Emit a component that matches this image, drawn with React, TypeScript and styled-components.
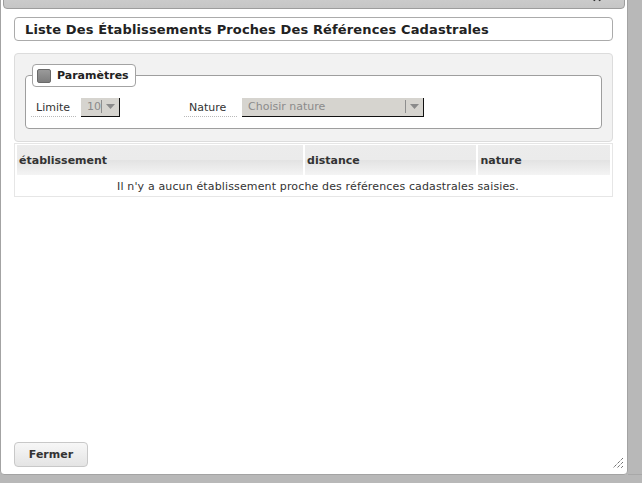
import React from "react";
import styled, { createGlobalStyle } from "styled-components";

const GlobalStyle = createGlobalStyle`
  html, body { margin: 0; padding: 0; }
  body {
    font-family: "DejaVu Sans", Verdana, sans-serif;
    font-size: 11px;
    color: #333;
    background: #b8b8b8;
  }
  * { box-sizing: border-box; }
`;

const Page = styled.div`
  position: relative;
  width: 642px;
  height: 483px;
  overflow: hidden;
  background: #b8b8b8;
`;

/* ---------- background application (under the modal) ---------- */
const Backdrop = styled.div`
  display: grid;
  grid-template-columns: 1fr 14px;
  grid-template-rows: 1fr 9px;
  width: 100%;
  height: 100%;
`;

const BackSpacer = styled.div``;

const RightStrip = styled.div`
  grid-row: 1 / span 2;
  display: flex;
  flex-direction: column;
  color: #8a8a8a;
  font-size: 12px;
`;

const StripCell = styled.div<{ $h: number; $line?: string }>`
  height: ${(p) => p.$h}px;
  border-bottom: ${(p) => (p.$line ? `1px solid ${p.$line}` : "none")};
  padding-left: 1px;
  line-height: ${(p) => p.$h}px;
  overflow: hidden;
  white-space: nowrap;
`;

const StripIcons = styled.div`
  height: 44px;
  display: flex;
  gap: 3px;
  padding-top: 6px;
  align-items: flex-start;
`;

const BracketBox = styled.div`
  width: 4px;
  height: 16px;
  border: 1px solid #a2a2a2;
  border-left: none;
`;

const MiniIcon = styled.div`
  width: 6px;
  height: 16px;
  border: 1px solid #8c8c8c;
  background: repeating-linear-gradient(#a8a8a8 0 2px, #c4c4c4 2px 4px);
`;

const RoundTab = styled.div`
  width: 6px;
  height: 20px;
  margin-top: 130px;
  border: 1px solid #ababab;
  border-left: none;
  border-radius: 0 4px 4px 0;
`;

const BottomRow = styled.div`
  display: flex;
  color: #858585;
  font-size: 12px;
  line-height: 11px;
  overflow: hidden;
  border-top: 1px solid #a8a8a8;
`;

const BottomCell = styled.div<{ $w?: number; $pad?: number; $light?: boolean }>`
  flex: ${(p) => (p.$w ? `0 0 ${p.$w}px` : "1")};
  padding-left: ${(p) => p.$pad ?? 0}px;
  padding-top: 1px;
  border-right: 1px solid #a9a9a9;
  background: ${(p) => (p.$light ? "#bdbdbd" : "transparent")};
  white-space: nowrap;
  overflow: hidden;
`;

/* ---------- dialog ---------- */
const Dialog = styled.div`
  position: absolute;
  left: 0;
  top: -18px;
  width: 628px;
  height: 493px;
  display: flex;
  flex-direction: column;
  padding: 2px;
  background: #fff;
  border: 1px solid #a3a3a3;
  border-radius: 4px;
`;

const TitleBar = styled.div`
  flex: 0 0 24px;
  display: flex;
  align-items: center;
  justify-content: flex-end;
  padding-right: 22px;
  background: linear-gradient(#d2d2d2, #c6c6c6);
  border: 1px solid #9d9d9d;
  border-radius: 4px;
`;

const Content = styled.div`
  flex: 1;
  display: flex;
  flex-direction: column;
  padding: 8px 12px 0 11px;
`;

const TitleBox = styled.div`
  height: 24px;
  display: flex;
  align-items: center;
  padding-left: 10px;
  border: 1px solid #ababab;
  border-radius: 4px;
  font-size: 13px;
  font-weight: bold;
  letter-spacing: 0.13px;
  color: #222;
`;

const Panel = styled.div`
  margin-top: 12px;
  padding: 10px 10px 12px 10px;
  background: #f2f2f2;
  border: 1px solid #dcdcdc;
  border-radius: 4px;
`;

const FieldSet = styled.fieldset`
  margin: 0;
  padding: 10px 5px 11px 5px;
  border: 1px solid #9e9e9e;
  border-radius: 4px;
  background: #fff;
`;

const Legend = styled.legend`
  display: flex;
  align-items: center;
  gap: 6px;
  height: 23px;
  padding: 0 6px 0 4px;
  margin-left: 1px;
  background: #fff;
  border: 1px solid #a3a3a3;
  border-radius: 4px;
  font-weight: bold;
  color: #222;
`;

const ToggleBox = styled.span`
  width: 14px;
  height: 14px;
  border: 1px solid #6a6a6a;
  border-radius: 2px;
  background: linear-gradient(#9a9a9a, #7e7e7e);
`;

const FieldRow = styled.div`
  display: flex;
  align-items: center;
  height: 20px;
`;

const FieldGroup = styled.div<{ $w?: number }>`
  display: flex;
  align-items: center;
  gap: 5px;
  flex: ${(p) => (p.$w ? `0 0 ${p.$w}px` : "0 0 auto")};
`;

const FieldLabel = styled.span<{ $w: number }>`
  width: ${(p) => p.$w}px;
  height: 20px;
  line-height: 21px;
  padding-left: 5px;
  border-bottom: 1px dotted #b9b9b9;
  color: #333;
`;

const Select = styled.div<{ $w: number }>`
  width: ${(p) => p.$w}px;
  height: 19px;
  display: flex;
  align-items: center;
  background: #d6d4cf;
  border-right: 1px solid #111;
  border-bottom: 1px solid #111;
  color: #8b8b8b;
  padding-left: 6px;
`;

const SelectText = styled.span`
  flex: 1;
  white-space: nowrap;
  overflow: hidden;
`;

const SelectArrow = styled.span`
  width: 18px;
  height: 13px;
  display: flex;
  align-items: center;
  justify-content: center;
  border-left: 1px solid #8e8e8e;
`;

const TableFrame = styled.table`
  margin-top: 1px;
  width: 100%;
  border: 1px solid #e6e6e6;
  border-collapse: separate;
  border-spacing: 2px 0;
  padding: 1px 0 0 0;
`;

const HeadCell = styled.th<{ $w: number }>`
  width: ${(p) => p.$w}px;
  height: 30px;
  padding: 0 2px;
  text-align: left;
  font-weight: bold;
  color: #333;
  background: linear-gradient(#ececec 0%, #ebebeb 50%, #e3e3e3 51%, #f4f4f4 100%);
`;

const EmptyCell = styled.td`
  height: 21px;
  text-align: center;
  color: #333;
  letter-spacing: 0.14px;
  padding: 1px 0 0 9px;
`;

const Footer = styled.div`
  display: flex;
  padding: 0 11px 5px;
  position: relative;
`;

const Button = styled.button`
  width: 74px;
  height: 25px;
  font-family: inherit;
  font-size: 11px;
  font-weight: bold;
  color: #333;
  background: linear-gradient(#f7f7f7, #e4e4e4);
  border: 1px solid #c8c8c8;
  border-radius: 4px;
  padding: 0;
`;

const ResizeGrip = styled.svg`
  position: absolute;
  right: 1px;
  bottom: 3px;
`;

const Arrow = () => (
  <svg width="9" height="5" viewBox="0 0 9 5">
    <path d="M0 0h9L4.5 5z" fill="#8a8a8a" />
  </svg>
);

export default function App() {
  return (
    <>
      <GlobalStyle />
      <Page>
        <Backdrop>
          <BackSpacer />
          <RightStrip>
            <StripCell $h={18} $line="#8f8f8f">S</StripCell>
            <StripCell $h={20}>rô</StripCell>
            <StripCell $h={75} $line="#a9a9a9" />
            <StripIcons>
              <BracketBox />
              <MiniIcon />
            </StripIcons>
            <StripCell $h={50} $line="#a9a9a9" />
            <StripCell $h={14} $line="#a9a9a9" />
            <RoundTab />
          </RightStrip>
          <BottomRow>
            <BottomCell $w={181} />
            <BottomCell $w={12} />
            <BottomCell $w={19} />
            <BottomCell $w={10} />
            <BottomCell $w={104} $pad={10}>Type</BottomCell>
            <BottomCell $pad={4} $light>[M] Magasin de vente, de centre commerciaux</BottomCell>
          </BottomRow>
        </Backdrop>

        <Dialog>
          <TitleBar>
            <svg width="10" height="10" viewBox="0 0 10 10">
              <path d="M1.5 1.5l7 7M8.5 1.5l-7 7" stroke="#2a2a2a" strokeWidth="2.4" />
            </svg>
          </TitleBar>
          <Content>
            <TitleBox>Liste Des Établissements Proches Des Références Cadastrales</TitleBox>
            <Panel>
              <FieldSet>
                <Legend>
                  <ToggleBox />
                  Paramètres
                </Legend>
                <FieldRow>
                  <FieldGroup $w={153}>
                    <FieldLabel $w={45}>Limite</FieldLabel>
                    <Select $w={39}>
                      <SelectText>10</SelectText>
                      <SelectArrow>
                        <Arrow />
                      </SelectArrow>
                    </Select>
                  </FieldGroup>
                  <FieldGroup>
                    <FieldLabel $w={53}>Nature</FieldLabel>
                    <Select $w={182}>
                      <SelectText>Choisir nature</SelectText>
                      <SelectArrow>
                        <Arrow />
                      </SelectArrow>
                    </Select>
                  </FieldGroup>
                </FieldRow>
              </FieldSet>
            </Panel>
            <TableFrame>
              <thead>
                <tr>
                  <HeadCell $w={287}>établissement</HeadCell>
                  <HeadCell $w={172}>distance</HeadCell>
                  <HeadCell $w={132}>nature</HeadCell>
                </tr>
              </thead>
              <tbody>
                <tr>
                  <EmptyCell colSpan={3}>
                    Il n'y a aucun établissement proche des références cadastrales saisies.
                  </EmptyCell>
                </tr>
              </tbody>
            </TableFrame>
          </Content>
          <Footer>
            <Button>Fermer</Button>
            <ResizeGrip width="12" height="12" viewBox="0 0 12 12">
              <path d="M11 1L1 11M11 5L5 11M11 9L9 11" stroke="#333" strokeWidth="1" strokeDasharray="1 1" />
            </ResizeGrip>
          </Footer>
        </Dialog>
      </Page>
    </>
  );
}
